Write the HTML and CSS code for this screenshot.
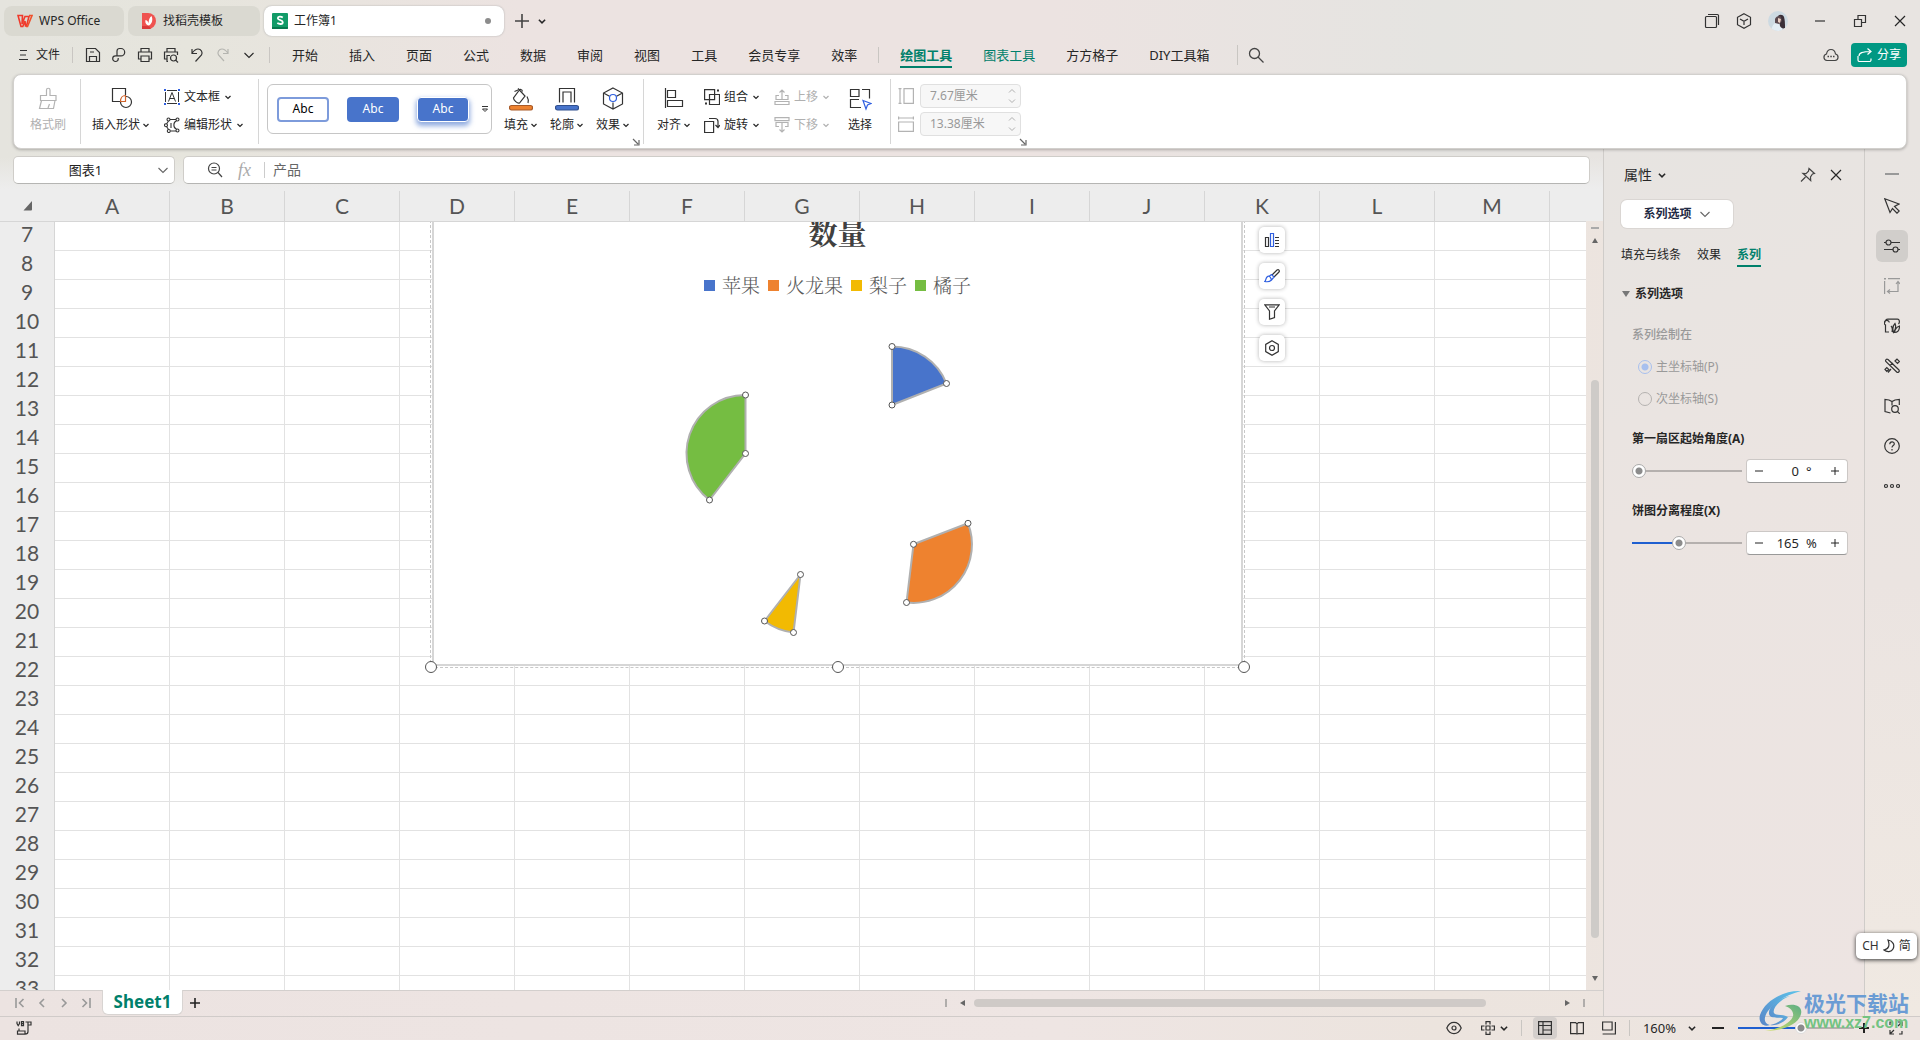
FILE: index.html
```html
<!DOCTYPE html>
<html lang="zh-CN">
<head>
<meta charset="utf-8">
<title>工作簿1 - WPS Office</title>
<link rel="stylesheet" href="styles.css">
</head>
<body>
<svg class="defs" aria-hidden="true">
  <symbol id="chev" viewBox="0 0 8 8"><path d="M1.500 3 4 5.500 6.500 3" fill="none" stroke="currentColor" stroke-width="1.200"/></symbol>
  <symbol id="chev-wide" viewBox="0 0 12 12"><path d="M1.500 4 6 8.500 10.500 4" fill="none" stroke="currentColor" stroke-width="1.100"/></symbol>
  <symbol id="launch" viewBox="0 0 8 8"><path d="M1 1 6 6M7 2v5H2" fill="none" stroke="#666" stroke-width="1.200"/></symbol>
  <symbol id="close" viewBox="0 0 16 16"><path d="M3 3l10 10M13 3 3 13" fill="none" stroke="currentColor" stroke-width="1.200"/></symbol>
</svg>

<header class="top">
  <div class="tabbar">
    <button class="doc-tab doc-home"><svg width="16" height="14" viewBox="0 0 16 14"><path d="M1 1.500h4.500L5 10l3-7.500h4L9.500 12h-1L8 7 5.800 12.500H4z" fill="none" stroke="#f0392b" stroke-width="1.600"/><path d="M12 1.500h3L10.500 12.500H9" fill="none" stroke="#f0502b" stroke-width="1.600"/></svg>WPS Office</button>
    <button class="doc-tab doc-docer"><svg width="16" height="16" viewBox="0 0 16 16"><path d="M1 0h6a8 8 0 0 1 0 16H1z" fill="#ef5350"/><path d="M1 13h7l2 3H1z" fill="#d93a3a"/><path d="M8 12.500C4.500 12 4 9 4.500 7c2 .5 3 2 3.200 3.500C7.500 7 8.500 4.500 10.500 3c1.500 3 1 7.500-2.500 9.500z" fill="#fff"/></svg>找稻壳模板</button>
    <button class="doc-tab doc-active"><svg width="16" height="16" viewBox="0 0 16 16"><rect width="16" height="16" rx="1" fill="#129b68"/><path d="M0 14h16v1a1 1 0 0 1-1 1H0z" fill="#08794e"/><path d="M10.800 4.500C9 3.200 5.800 3.200 5.800 5.300c0 2.400 5 1.400 5 3.900 0 2.300-3.500 2.200-5.500.9" fill="none" stroke="#fff" stroke-width="1.800"/></svg>工作簿1<span class="dot"></span></button>
    <button class="icon-btn new-tab" aria-label="新建"><svg width="14" height="14" viewBox="0 0 14 14"><path d="M7 0v14M0 7h14" stroke="#444" stroke-width="1.600"/></svg></button>
    <button class="icon-btn tab-more" aria-label="标签列表"><svg width="10" height="10"><use href="#chev"/></svg></button>
    <div class="window-tools">
      <button class="icon-btn" aria-label="窗口"><svg width="16" height="16" viewBox="0 0 16 16" fill="none" stroke="#333" stroke-width="1.200"><rect x="1.500" y="3.500" width="11" height="11" rx="1"/><path d="M4 1.500h9.500a1 1 0 0 1 1 1V12"/></svg></button>
      <button class="icon-btn" aria-label="应用"><svg width="16" height="16" viewBox="0 0 16 16" fill="none" stroke="#333" stroke-width="1.200"><path d="M8 .8 14.500 4.300v7.400L8 15.200 1.500 11.700V4.300zM4 6l4 2.200L12 6M8 8.200V12"/></svg></button>
      <button class="icon-btn avatar" aria-label="账户"><svg width="20" height="20" viewBox="0 0 20 20"><defs><clipPath id="round"><circle cx="10" cy="10" r="10"/></clipPath></defs><g clip-path="url(#round)"><rect width="20" height="20" fill="#cddae2"/><path d="M3 20c1-6 4-9 7-9l4 4v5z" fill="#e4eef5"/><path d="M10 5c2-2 5-1.500 6 1 1 3 1 7 1 11-2 1-4 0-5-2z" fill="#3a2f38"/><path d="M7 8c1-3 5-4 6-2l1 4-3 3-4-1z" fill="#5b4a50"/><path d="M10 7l3 1-1 4-2-1z" fill="#ead0c4"/></g></svg></button>
      <button class="icon-btn" aria-label="最小化"><svg width="16" height="16" viewBox="0 0 16 16"><path d="M3 8h10" stroke="#333" stroke-width="1.200"/></svg></button>
      <button class="icon-btn" aria-label="还原"><svg width="16" height="16" viewBox="0 0 16 16" fill="none" stroke="#333" stroke-width="1.200"><path d="M2.500 6.500h7v7h-7zM6 6V2.500h7.500v7H10"/></svg></button>
      <button class="icon-btn" aria-label="关闭"><svg width="16" height="16"><use href="#close"/></svg></button>
    </div>
  </div>

  <div class="menubar">
    <button class="file-btn"><svg width="9" height="12" viewBox="0 0 9 12"><path d="M1 1.500h7M1 6h6M0 10.500h9" stroke="#333" stroke-width="1.200"/></svg>文件</button>
    <i class="vsep file-sep"></i>
    <div class="quick">
      <button class="icon-btn" aria-label="保存"><svg width="16" height="16" viewBox="0 0 16 16" fill="none" stroke="#333" stroke-width="1.200"><path d="M1.500 1.500h9l4 4v9h-13zM5 5h4M4.500 14V9.500h7V14"/></svg></button>
      <button class="icon-btn" aria-label="输出"><svg width="16" height="16" viewBox="0 0 16 16" fill="none" stroke="#333" stroke-width="1.200"><path d="M6 8.500V4a2.500 2.500 0 0 1 2.500-2.500h1.500a3.700 3.700 0 0 1 0 7.400H4.500a2.700 2.700 0 0 0 0 5.600c2 0 2.700-1.300 2.700-2.500V11"/></svg></button>
      <button class="icon-btn" aria-label="打印"><svg width="16" height="16" viewBox="0 0 16 16" fill="none" stroke="#333" stroke-width="1.200"><path d="M4 5V1.500h8V5M4 12H1.500V5h13v7H12M4 9h8v5.500H4z"/></svg></button>
      <button class="icon-btn" aria-label="打印预览"><svg width="16" height="16" viewBox="0 0 16 16" fill="none" stroke="#333" stroke-width="1.200"><path d="M4 5V1.500h8V5M4 12H1.500V5h13v3M5 14.500H4V8.500h3"/><circle cx="10.500" cy="11" r="3"/><path d="m12.700 13.200 2.300 2.300"/></svg></button>
      <button class="icon-btn" aria-label="撤销"><svg width="16" height="16" viewBox="0 0 16 16" fill="none" stroke="#333" stroke-width="1.200"><path d="M3 2v4.500h5M3.200 6C5 3.500 7 2 9 2a4 4 0 0 1 3.500 6L6.500 14.500"/></svg></button>
      <button class="icon-btn muted" aria-label="恢复"><svg width="16" height="16" viewBox="0 0 16 16" fill="none" stroke="#b5b5b0" stroke-width="1.200"><path d="M13 2v4.500H8M12.800 6C11 3.500 9 2 7 2a4 4 0 0 0-3.500 6L9 14"/></svg></button>
      <button class="icon-btn" aria-label="更多"><svg width="12" height="12"><use href="#chev-wide"/></svg></button>
    </div>
    <i class="vsep file-sep"></i>
    <nav class="menus menus-first"><a href="#">开始</a><a href="#">插入</a><a href="#">页面</a><a href="#">公式</a><a href="#">数据</a><a href="#">审阅</a><a href="#">视图</a><a href="#">工具</a><a href="#">会员专享</a><a href="#">效率</a></nav>
    <i class="vsep menu-sep"></i>
    <nav class="menus"><a href="#" class="current">绘图工具</a><a href="#" class="context">图表工具</a><a href="#">方方格子</a><a href="#">DIY工具箱</a></nav>
    <i class="vsep search-sep"></i>
    <button class="icon-btn" aria-label="搜索"><svg width="16" height="16" viewBox="0 0 16 16" fill="none" stroke="#444" stroke-width="1.300"><circle cx="6.500" cy="6.500" r="5"/><path d="m10 10 5.500 5.500"/></svg></button>
    <div class="share-area">
      <button class="icon-btn" aria-label="云"><svg width="16" height="14" viewBox="0 0 16 14" fill="none" stroke="#444" stroke-width="1.200"><path d="M4 12.500a3.300 3.300 0 0 1-.5-6.500C4 3 6 1.500 8 1.500S12 3 12.500 6a3.300 3.300 0 0 1-.5 6.500z"/><path d="M4.500 8.500h1.500M7.300 8.500h1.500M10 8.500h1.500" stroke-width="1.500"/></svg></button>
      <button class="share"><svg width="15" height="14" viewBox="0 0 15 14" fill="none" stroke="#fff" stroke-width="1.200"><path d="M1 8v4a1.500 1.500 0 0 0 1.500 1.500h10A1.500 1.500 0 0 0 14 12v-1.500M2 8c0-3 3-4.500 12-4.500M10.500.5l3.500 3-3.500 3"/></svg>分享</button>
    </div>
  </div>

  <div class="ribbon">
    <section class="group g-format">
      <button class="tool muted"><svg width="24" height="24" viewBox="0 0 24 24" fill="none" stroke="#b3b3b3" stroke-width="1.200"><path d="M4.500 8.500h6V3a1.700 1.700 0 0 1 3.500 0v5.500h6v5h-15.500zM5.500 13.500 3.500 21.500h14l1.500-8M12 21l1.500-4"/></svg><span>格式刷</span></button>
    </section>
    <section class="group g-insert">
      <button class="tool"><svg width="24" height="24" viewBox="0 0 24 24" fill="none" stroke="#333" stroke-width="1.200"><path d="M11 14.500H3.500v-13h13V8"/><circle cx="17" cy="15" r="5.500"/><path d="M11.500 14.500c0-3.500 2-6 5-6v6z" stroke="#d0622a" fill="#fff"/></svg><span>插入形状<svg class="chev"><use href="#chev"/></svg></span></button>
      <div class="stack">
        <button class="row-tool"><svg width="16" height="16" viewBox="0 0 16 16" fill="none"><path d="M3 1.500h10M3 14.500h10M1.500 3v10M14.500 3v10M4.500 12.500 8 3.500l3.500 9M5.700 9.500h4.600" stroke="#333"/><path d="M0 0h2v2H0zM14 0h2v2h-2zM0 14h2v2H0zM14 14h2v2h-2z" fill="#2f5fe0"/></svg><span>文本框</span><svg class="chev"><use href="#chev"/></svg></button>
        <button class="row-tool"><svg width="16" height="16" viewBox="0 0 16 16" fill="none" stroke="#333" stroke-width="1.100"><path d="M6 2.500h6M4.500 4 2.500 7M2.500 9.500l2 3M6.500 14h5.500M12.500 4C9 5 9 11 12.500 12M7 6v5"/><circle cx="4.500" cy="2.500" r="1.500"/><circle cx="13.500" cy="2.500" r="1.500"/><circle cx="2" cy="8.200" r="1.500"/><circle cx="4.800" cy="14" r="1.500"/><circle cx="13.500" cy="13.500" r="1.500"/></svg><span>编辑形状</span><svg class="chev"><use href="#chev"/></svg></button>
      </div>
    </section>
    <section class="group g-style">
      <div class="gallery">
        <button class="swatch outlined">Abc</button>
        <button class="swatch solid">Abc</button>
        <button class="swatch glow">Abc</button>
        <button class="icon-btn more" aria-label="更多样式"><svg width="8" height="8" viewBox="0 0 8 8"><path d="M1 1.500h6" stroke="#333"/><path d="M1.500 4h5L4 6.500z" fill="#fff" stroke="#333"/></svg></button>
      </div>
      <button class="tool"><svg width="24" height="24" viewBox="0 0 24 24" fill="none" stroke="#333" stroke-width="1.200"><path d="M5.500 4.500 9 3M9 1.500l7 7.500-5.500 7c-2 1-6-3-6-5L10 3.500c1-1.500 3-1.500 3.500 1M18 9.500c1.500 2.500 1.700 4.500 1 6.500"/><rect x=".5" y="18.500" width="23" height="4.500" rx="2" fill="#ee822f" stroke="#a85a28"/></svg><span>填充<svg class="chev"><use href="#chev"/></svg></span></button>
      <button class="tool"><svg width="24" height="24" viewBox="0 0 24 24" fill="none" stroke="#333" stroke-width="1.200"><path d="M4.500 15.500v-14h15v14M8 15.500V5h8v10.500"/><rect x=".5" y="18.500" width="23" height="4.500" rx="2" fill="#4874cb" stroke="#31508f"/></svg><span>轮廓<svg class="chev"><use href="#chev"/></svg></span></button>
      <button class="tool"><svg width="24" height="24" viewBox="0 0 24 24" fill="none" stroke="#333" stroke-width="1.200"><path d="M12 1 21.500 6v11L12 22 2.500 17V6zM2.500 6l6 3.300M21.500 6l-6 3.300M12 15.500V22"/><circle cx="12" cy="11" r="3.500" stroke="#2f5fe0"/></svg><span>效果<svg class="chev"><use href="#chev"/></svg></span></button>
      <button class="launcher" aria-label="样式设置"><svg width="8" height="8"><use href="#launch"/></svg></button>
    </section>
    <section class="group g-arrange">
      <button class="tool"><svg width="24" height="24" viewBox="0 0 24 24" fill="none" stroke="#333" stroke-width="1.200"><path d="M3.500 1v20M5.500 3.500h8v7h-8zM5.500 13.500h15v6h-15z"/></svg><span>对齐<svg class="chev"><use href="#chev"/></svg></span></button>
      <div class="stack s-group">
        <button class="row-tool"><svg width="16" height="16" viewBox="0 0 16 16" fill="none" stroke="#333" stroke-width="1.200"><path d="M.6.6h10v10H.6zM5.500 5.500h10v10h-10z"/><path d="M13 1.500h2M1 14.500h2" stroke-width="2"/></svg><span>组合</span><svg class="chev"><use href="#chev"/></svg></button>
        <button class="row-tool"><svg width="16" height="16" viewBox="0 0 16 16" fill="none" stroke="#333" stroke-width="1.200"><path d="M.6 4.500h9v11h-9zM5 1.500h6c2 0 3 1 3 3V10M11.500 8l2.500 2.500L16 8"/></svg><span>旋转</span><svg class="chev"><use href="#chev"/></svg></button>
      </div>
      <div class="stack s-order">
        <button class="row-tool muted"><svg width="16" height="16" viewBox="0 0 16 16" fill="none" stroke="#b3b3b3" stroke-width="1.200"><path d="M8 10.500V.8M5.500 3.500 8 1l2.500 2.500M5 6.500H2v4h12v-4h-3M1 12.500h14v3H1z"/></svg><span>上移</span><svg class="chev"><use href="#chev"/></svg></button>
        <button class="row-tool muted"><svg width="16" height="16" viewBox="0 0 16 16" fill="none" stroke="#b3b3b3" stroke-width="1.200"><path d="M8 5.500v9.700M5.500 12.500 8 15l2.500-2.500M5 9.500H2v-4h12v4h-3M1 .6h14v3H1z"/></svg><span>下移</span><svg class="chev"><use href="#chev"/></svg></button>
      </div>
      <button class="tool t-select"><svg width="24" height="24" viewBox="0 0 24 24" fill="none" stroke="#333" stroke-width="1.200"><path d="M2.500 2.500H11v7H2.500zM14 2.500h7.500v9M13 20.500H2.500v-8H11"/><path d="m15 13.500 8 3-3.500 1.500-1.500 4z" stroke="#2f5fe0"/></svg><span>选择</span></button>
    </section>
    <section class="group g-size">
      <label class="size-row"><svg width="16" height="16" viewBox="0 0 16 16" fill="none" stroke="#b3b3b3" stroke-width="1.200"><path d="M.5.600h3M2 .6v14.800M.5 15.400h3M6 .6h9.400v14.800H6z"/></svg><span class="size-box"><input type="text" value="7.67厘米" disabled aria-label="高度"><svg width="8" height="16" viewBox="0 0 8 16" fill="none" stroke="#b0b0b0"><path d="M1 4.500 4 1.500l3 3M1 11.500l3 3 3-3"/></svg></span></label>
      <label class="size-row"><svg width="16" height="16" viewBox="0 0 16 16" fill="none" stroke="#b3b3b3" stroke-width="1.200"><path d="M.6.500v3M.6 2h14.800M15.400.500v3M.6 6v9.400h14.800V6z"/></svg><span class="size-box"><input type="text" value="13.38厘米" disabled aria-label="宽度"><svg width="8" height="16" viewBox="0 0 8 16" fill="none" stroke="#b0b0b0"><path d="M1 4.500 4 1.500l3 3M1 11.500l3 3 3-3"/></svg></span></label>
      <button class="launcher" aria-label="大小设置"><svg width="8" height="8"><use href="#launch"/></svg></button>
    </section>
  </div>
</header>

<main class="main">
  <div class="work">
    <div class="formula-row">
      <div class="name-box"><input type="text" value="图表1" aria-label="名称框"><svg width="12" height="12"><use href="#chev-wide"/></svg></div>
      <div class="formula-box">
        <svg width="16" height="16" viewBox="0 0 16 16" fill="none" stroke="#444" stroke-width="1.200"><circle cx="7" cy="6.500" r="5.500"/><path d="m11 10.500 4 4.500M4.500 5.500h5M4.500 8h5"/></svg>
        <em class="fx">fx</em>
        <input type="text" value="产品" aria-label="编辑栏">
      </div>
    </div>
    <div class="sheet">
      <div class="grid-view">
        <table class="cells">
          <colgroup><col class="c-head"><col><col><col><col><col><col><col><col><col><col><col><col><col><col></colgroup>
          <thead><tr><th class="corner"><svg width="10" height="10" viewBox="0 0 10 10"><path d="M9 0v8.500a1 1 0 0 1-1 1H.5z" fill="#666"/></svg></th><th>A</th><th>B</th><th>C</th><th>D</th><th>E</th><th>F</th><th>G</th><th>H</th><th>I</th><th>J</th><th>K</th><th>L</th><th>M</th><th></th></tr></thead>
          <tbody>
<tr><th>7<td><td><td><td><td><td><td><td><td><td><td><td><td><td>
<tr><th>8<td><td><td><td><td><td><td><td><td><td><td><td><td><td>
<tr><th>9<td><td><td><td><td><td><td><td><td><td><td><td><td><td>
<tr><th>10<td><td><td><td><td><td><td><td><td><td><td><td><td><td>
<tr><th>11<td><td><td><td><td><td><td><td><td><td><td><td><td><td>
<tr><th>12<td><td><td><td><td><td><td><td><td><td><td><td><td><td>
<tr><th>13<td><td><td><td><td><td><td><td><td><td><td><td><td><td>
<tr><th>14<td><td><td><td><td><td><td><td><td><td><td><td><td><td>
<tr><th>15<td><td><td><td><td><td><td><td><td><td><td><td><td><td>
<tr><th>16<td><td><td><td><td><td><td><td><td><td><td><td><td><td>
<tr><th>17<td><td><td><td><td><td><td><td><td><td><td><td><td><td>
<tr><th>18<td><td><td><td><td><td><td><td><td><td><td><td><td><td>
<tr><th>19<td><td><td><td><td><td><td><td><td><td><td><td><td><td>
<tr><th>20<td><td><td><td><td><td><td><td><td><td><td><td><td><td>
<tr><th>21<td><td><td><td><td><td><td><td><td><td><td><td><td><td>
<tr><th>22<td><td><td><td><td><td><td><td><td><td><td><td><td><td>
<tr><th>23<td><td><td><td><td><td><td><td><td><td><td><td><td><td>
<tr><th>24<td><td><td><td><td><td><td><td><td><td><td><td><td><td>
<tr><th>25<td><td><td><td><td><td><td><td><td><td><td><td><td><td>
<tr><th>26<td><td><td><td><td><td><td><td><td><td><td><td><td><td>
<tr><th>27<td><td><td><td><td><td><td><td><td><td><td><td><td><td>
<tr><th>28<td><td><td><td><td><td><td><td><td><td><td><td><td><td>
<tr><th>29<td><td><td><td><td><td><td><td><td><td><td><td><td><td>
<tr><th>30<td><td><td><td><td><td><td><td><td><td><td><td><td><td>
<tr><th>31<td><td><td><td><td><td><td><td><td><td><td><td><td><td>
<tr><th>32<td><td><td><td><td><td><td><td><td><td><td><td><td><td>
<tr><th>33<td><td><td><td><td><td><td><td><td><td><td><td><td><td>
          </tbody>
        </table>
        <div class="float-layer">
          <figure class="chart">
            <figcaption class="chart-title">数量</figcaption>
            <ul class="legend"><li class="blue">苹果</li><li class="orange">火龙果</li><li class="yellow">梨子</li><li class="green">橘子</li></ul>
            <svg class="plot" width="807" height="366" viewBox="434 298 807 366">
              <g stroke="#b0b0b0" stroke-width="2" stroke-linejoin="round">
                <path d="M892 406V347.500A58.500 58.500 0 0 1 946.500 384.500z" fill="#4874cb"/>
                <path d="M745.500 454.500V396A58.500 58.500 0 0 0 709.500 501z" fill="#75bd42"/>
                <path d="M913.500 545.300 968 524.300A58.500 58.500 0 0 1 906.500 603.500z" fill="#ee822f"/>
                <path d="M800.500 575.500 764.500 622A58.500 58.500 0 0 0 793.500 633.500z" fill="#f2ba02"/>
              </g>
              <g fill="#fff" stroke="#555">
                <circle cx="892" cy="406" r="3"/><circle cx="892" cy="347.500" r="3"/><circle cx="946.500" cy="384.500" r="3"/>
                <circle cx="745.500" cy="454.500" r="3"/><circle cx="745.500" cy="396" r="3"/><circle cx="709.500" cy="501" r="3"/>
                <circle cx="913.500" cy="545.300" r="3"/><circle cx="968" cy="524.300" r="3"/><circle cx="906.500" cy="603.500" r="3"/>
                <circle cx="800.500" cy="575.500" r="3"/><circle cx="764.500" cy="622" r="3"/><circle cx="793.500" cy="633.500" r="3"/>
              </g>
            </svg>
            <i class="handle h-left"></i><i class="handle h-mid"></i><i class="handle h-right"></i>
          </figure>
          <div class="chart-tools">
            <button aria-label="图表元素"><svg width="16" height="16" viewBox="0 0 16 16" fill="none" stroke="#333" stroke-width="1.200"><path d="M1.500 5.500h3v9h-3zM11 5.500h4M11 8.500h4M11 11.500h4M11 14.500h4"/><path d="M6.500 1.500h3v13h-3z" stroke="#2f5fe0"/></svg></button>
            <button aria-label="图表样式"><svg width="16" height="16" viewBox="0 0 16 16" fill="none" stroke="#333" stroke-width="1.200"><path d="m8 7 5-5c1.500-1 3 .5 2 2l-5 5"/><path d="M7.500 6.500 10 9 7.500 12C5.500 14 3 14 .8 13.500 2 12.500 1.500 10.500 3 9s3-1.500 4.500 3M7.500 6.500 5.500 8" stroke="#2f5fe0"/></svg></button>
            <button aria-label="筛选"><svg width="16" height="16" viewBox="0 0 16 16" fill="none" stroke="#333" stroke-width="1.200"><path d="M.8.8h14.400L10.500 7v6.500l-5 1.700V7zM5 3h6"/></svg></button>
            <button aria-label="设置"><svg width="16" height="16" viewBox="0 0 16 16" fill="none" stroke="#333" stroke-width="1.200"><path d="M8 .8 14.300 4.400v7.200L8 15.200 1.700 11.600V4.400z"/><circle cx="8" cy="8" r="2.500"/></svg></button>
          </div>
        </div>
      </div>
      <div class="vscroll"><i class="dash"></i><i class="tri-up"></i><i class="thumb"></i><i class="tri-down"></i></div>
    </div>
    <div class="sheet-tabs">
      <div class="sheet-nav">
        <button class="icon-btn" aria-label="首个"><svg width="10" height="10" viewBox="0 0 10 10" fill="none" stroke="#999" stroke-width="1.600"><path d="M1 0v10M8.500 1 4.500 5l4 4"/></svg></button>
        <button class="icon-btn" aria-label="上一个"><svg width="10" height="10" viewBox="0 0 10 10" fill="none" stroke="#999" stroke-width="1.600"><path d="M7 1 3 5l4 4"/></svg></button>
        <button class="icon-btn" aria-label="下一个"><svg width="10" height="10" viewBox="0 0 10 10" fill="none" stroke="#999" stroke-width="1.600"><path d="m3 1 4 4-4 4"/></svg></button>
        <button class="icon-btn" aria-label="末个"><svg width="10" height="10" viewBox="0 0 10 10" fill="none" stroke="#999" stroke-width="1.600"><path d="m1.500 1 4 4-4 4M9 0v10"/></svg></button>
      </div>
      <button class="sheet-tab">Sheet1</button>
      <button class="icon-btn add-sheet" aria-label="新建工作表"><svg width="10" height="10" viewBox="0 0 10 10"><path d="M5 0v10M0 5h10" stroke="#222" stroke-width="1.600"/></svg></button>
      <div class="hscroll"><i class="bar"></i><i class="tri-left"></i><i class="track"><i class="thumb"></i></i><i class="tri-right"></i><i class="bar"></i></div>
    </div>
  </div>

  <aside class="panel">
    <div class="panel-head"><h2>属性<svg width="10" height="10"><use href="#chev"/></svg></h2>
      <button class="icon-btn" aria-label="固定"><svg width="16" height="16" viewBox="0 0 16 16" fill="none" stroke="#444" stroke-width="1.200"><path d="m9 1.500 5.500 5-2 .5-2 3 .2 3.500L3 6.500l3 .2 2.500-2.500zM5.500 10 1 14.500"/></svg></button>
      <button class="icon-btn" aria-label="关闭面板"><svg width="16" height="16"><use href="#close"/></svg></button>
    </div>
    <button class="series-select">系列选项<svg width="12" height="12"><use href="#chev-wide"/></svg></button>
    <nav class="panel-tabs"><a href="#">填充与线条</a><a href="#">效果</a><a href="#" class="current">系列</a></nav>
    <h3 class="fold"><i></i>系列选项</h3>
    <fieldset class="axis" disabled>
      <legend>系列绘制在</legend>
      <label><input type="radio" name="axis" checked>主坐标轴(P)</label>
      <label><input type="radio" name="axis">次坐标轴(S)</label>
    </fieldset>
    <div class="field">
      <label for="angle">第一扇区起始角度(A)</label>
      <div class="field-row"><input type="range" id="angle" min="0" max="360" value="0">
        <span class="spinner"><button aria-label="减小角度"><svg width="8" height="8" viewBox="0 0 8 8"><path d="M0 4h8" stroke="#222"/></svg></button><input type="text" value="0" aria-label="角度值"><span>°</span><button aria-label="增大角度"><svg width="8" height="8" viewBox="0 0 8 8"><path d="M0 4h8M4 0v8" stroke="#222"/></svg></button></span></div>
    </div>
    <div class="field">
      <label for="explode">饼图分离程度(X)</label>
      <div class="field-row"><input type="range" id="explode" class="filled" min="0" max="400" value="165">
        <span class="spinner"><button aria-label="减小分离"><svg width="8" height="8" viewBox="0 0 8 8"><path d="M0 4h8" stroke="#222"/></svg></button><input type="text" value="165" aria-label="分离值"><span>%</span><button aria-label="增大分离"><svg width="8" height="8" viewBox="0 0 8 8"><path d="M0 4h8M4 0v8" stroke="#222"/></svg></button></span></div>
    </div>
  </aside>

  <aside class="strip">
    <i class="strip-dash"></i>
    <button aria-label="选择工具"><svg width="16" height="16" viewBox="0 0 16 16" fill="none" stroke="#333" stroke-width="1.200"><path d="M.8.8 15 6 10.500 8.500 15.200 13 13 15.200 8.500 10.500 6 14.500z"/></svg></button>
    <button class="on" aria-label="属性"><svg width="16" height="16" viewBox="0 0 16 16" fill="none" stroke="#333" stroke-width="1.200"><circle cx="4.500" cy="4.500" r="2.500"/><circle cx="11.500" cy="11.500" r="2.500"/><path d="M0 4.500h2M7 4.500h9M0 11.500h9M14 11.500h2"/></svg></button>
    <button aria-label="转换"><svg width="16" height="16" viewBox="0 0 16 16" fill="none" stroke="#999" stroke-width="1.200"><path d="M.6 3v13M4 .6h12M14 4v9.500H4M12 6l2-2.500L16 6M6 11.500 3.500 13.500 6 15.500"/><path d="M0 .6h2" stroke-width="2"/></svg></button>
    <button aria-label="图库"><svg width="16" height="16" viewBox="0 0 16 16" fill="none" stroke="#333" stroke-width="1.200"><path d="M5 14H1.500V6.500M1.500 7a2.500 2.500 0 1 1 3.800-2.500M1 4.500c0-2 1-3.300 3-3.300h9.500c2 0 2.500 3 1 4.800"/><path d="M7 8c1.500 1.500 1.500 4 1 6M11 5.500c-2.500 2.500-2.500 6-1.500 9 2-2.500 2.700-6 1.500-9zM15.500 8c-3 1-4.500 3.500-5 6.500 3 0 5-2.500 5-6.500z"/></svg></button>
    <button aria-label="工具"><svg width="16" height="16" viewBox="0 0 16 16" fill="none" stroke="#333" stroke-width="1.200"><path d="m4 1.500 11 10.500c1 1.500-1 3-2.300 2L1.800 3.500C1 2 2.500.5 4 1.500zM6 7.500 9 5"/><path d="m11 3 2-2 2.500 2.500-2 2zM1 11.500l1.800-2 2 2-2 2zM7 11l-3 3.500"/></svg></button>
    <button aria-label="查找"><svg width="16" height="16" viewBox="0 0 16 16" fill="none" stroke="#333" stroke-width="1.200"><path d="M6.500 15 1 13.500V1.500L5 2l3 1.500L11 2l4.300-.5V7M8 3.500v4"/><circle cx="11" cy="11" r="3.300"/><path d="m13.300 13.300 2.500 2.500"/></svg></button>
    <button aria-label="帮助"><svg width="16" height="16" viewBox="0 0 16 16" fill="none" stroke="#333" stroke-width="1.200"><circle cx="8" cy="8" r="7.300"/><path d="M5.800 6.200c0-3 4.500-3 4.500-.3C10.300 7.500 8 7.700 8 9.500M8 11v1.500"/></svg></button>
    <button aria-label="更多"><svg width="16" height="16" viewBox="0 0 16 16" fill="none" stroke="#333" stroke-width="1.200"><circle cx="2" cy="8" r="1.500"/><circle cx="8" cy="8" r="1.500"/><circle cx="14" cy="8" r="1.500"/></svg></button>
  </aside>
</main>

<footer class="status">
  <button class="icon-btn vb" aria-label="宏"><svg width="16" height="14" viewBox="0 0 16 14" fill="none" stroke="#333" stroke-width="1.200"><path d="M1 .5v2l1.200 2 1.300-2v-2M5.500.6v4h2V.6zM5.500 2.600h2M9.500 1H15v3h-3M12 1v9.500c0 1.700-1 2.700-3 2.700H1.500V10H9v3M3 10V7.500"/></svg></button>
  <div class="status-tools">
    <button class="icon-btn eye" aria-label="护眼"><svg width="16" height="14" viewBox="0 0 16 14" fill="none" stroke="#333" stroke-width="1.200"><path d="M.8 7C4-.5 12-.5 15.200 7 12 14.500 4 14.500.8 7z"/><circle cx="8" cy="7" r="2"/></svg></button>
    <button class="icon-btn cross" aria-label="阅读模式"><svg width="14" height="14" viewBox="0 0 14 14" fill="none" stroke="#333" stroke-width="1.200"><path d="M5 3.500V.6h4v2.900M5 10.500v2.900h4v-2.900M3.500 5H.6v4h2.900M10.500 5h2.900v4h-2.900M5 5h4v4H5z"/></svg><svg width="10" height="10"><use href="#chev"/></svg></button>
    <i class="vsep"></i>
    <button class="icon-btn view on" aria-label="普通视图"><svg width="14" height="14" viewBox="0 0 14 14" fill="none" stroke="#333" stroke-width="1.200"><path d="M.6.6h12.800v12.800H.6zM.6 4.500h12.800M5 .6v12.800M5 9h8.400"/></svg></button>
    <button class="icon-btn view" aria-label="分页预览"><svg width="14" height="14" viewBox="0 0 14 14" fill="none" stroke="#333" stroke-width="1.200"><path d="M.6 1.600h5L7 3l1.400-1.400h5v11H8.400L7 13l-1.400-.4h-5zM7 3v10"/></svg></button>
    <button class="icon-btn view" aria-label="页面布局"><svg width="14" height="14" viewBox="0 0 14 14" fill="none" stroke="#333" stroke-width="1.200"><path d="M.6 1h9.500v8H.6zM.6 13h12.800V1"/></svg></button>
    <i class="vsep"></i>
    <button class="zoom-value">160%<svg width="10" height="10"><use href="#chev"/></svg></button>
    <button class="icon-btn" aria-label="缩小"><svg width="12" height="12" viewBox="0 0 12 12"><path d="M0 6h12" stroke="#222" stroke-width="2"/></svg></button>
    <input type="range" class="zoom" min="0" max="100" value="55" aria-label="缩放">
    <button class="icon-btn" aria-label="放大"><svg width="10" height="10" viewBox="0 0 10 10"><path d="M5 0v10M0 5h10" stroke="#222" stroke-width="2"/></svg></button>
    <button class="icon-btn full" aria-label="全屏"><svg width="14" height="14" viewBox="0 0 14 14" fill="none" stroke="#333" stroke-width="1.200"><path d="M9 1h4v4M13 1 9 5M5 13H1V9M1 13l4-4M1 4V1h3M13 10v3h-3"/></svg></button>
  </div>
</footer>

<div class="ime"><span>CH</span><svg width="12" height="14" viewBox="0 0 12 14" fill="none" stroke="#333" stroke-width="1.200"><path d="M5 1c5 1 7 5 5 9-1.500 3-6 3.500-9 1C6 10 7 6 5 1z"/></svg><span>简</span></div>
<div class="brand">
  <svg width="44" height="42" viewBox="0 0 44 42"><defs><linearGradient id="sky" x1="0" y1="1" x2="1" y2="0"><stop offset="0" stop-color="#5a86c8"/><stop offset="1" stop-color="#5cc3ea"/></linearGradient><linearGradient id="leaf" x1="0" y1="1" x2="1" y2="0"><stop offset="0" stop-color="#d3e06a"/><stop offset="1" stop-color="#5cae84"/></linearGradient></defs><path d="M42 1C26 0 6 10 1 25c-2 7 3 13 10 10C5 34 4 28 9 21 16 11 28 5 42 1z" fill="url(#sky)"/><path d="M31 6C20 10 13 19 15 23c2 3 10 1 14 4-4 6-12 9-18 8 8-2 12-5 13-7-6-1-13 1-14-4C9 16 20 8 31 6z" fill="url(#sky)"/><path d="M26 16c9-3 18 0 16 8C40 33 26 41 6 41c14-2 26-8 28-15 1-4-2-8-8-10z" fill="url(#leaf)"/></svg>
  <div><strong>极光下载站</strong><span>www.xz7.com</span></div>
</div>
</body>
</html>
```
FILE: styles.css
```css
* { box-sizing: border-box; }
body {
  margin: 0;
  height: 100vh;
  display: flex;
  flex-direction: column;
  overflow: hidden;
  font: 12px/16px "Noto Sans", "Noto Sans CJK SC", sans-serif;
  color: #262626;
  background:
    linear-gradient(90deg, #e5e4de 0, #e6e5dd 10%, #ece3e1 27%, #ece3e1 55%, #e5e4e1 75%, #e8e4e1 88%) 0 0 / 100% 190px no-repeat,
    linear-gradient(90deg, #ece3e1 0, #eee5e3 55%, #ece4de 75%, #ede5e1 100%);
}
button, input { font: inherit; color: inherit; margin: 0; }
button { border: 0; background: none; padding: 0; white-space: nowrap; }
a { color: inherit; text-decoration: none; white-space: nowrap; }
h2, h3, ul, figure, fieldset { margin: 0; padding: 0; border: 0; }
svg { display: block; flex: none; }
.defs { position: absolute; width: 0; height: 0; }
.icon-btn { display: flex; align-items: center; justify-content: center; flex: none; }
.vsep { width: 1px; height: 16px; background: #c9c6c2; flex: none; }
.chev { width: 8px; height: 8px; }
.muted { color: #b0b0b0; }

/* title bar */
.tabbar { display: flex; align-items: center; height: 41px; padding-left: 4px; gap: 4px; }
.doc-tab { display: flex; align-items: center; height: 30px; border-radius: 8px; background: #dad9d1; gap: 6px; padding: 0 13px; text-align: left; }
.doc-home { width: 120px; }
.doc-docer { width: 132px; }
.doc-active { width: 240px; background: #fff; padding: 0 13px 0 8px; box-shadow: 0 0 2px #aaa; }
.dot { width: 6px; height: 6px; border-radius: 50%; background: #8c8c8c; margin-left: auto; }
.new-tab { margin-left: 7px; }
.tab-more { margin-left: 4px; }
.window-tools { margin-left: auto; display: flex; align-items: center; gap: 24px; padding-right: 12px; }
.window-tools .icon-btn { width: 16px; }
.window-tools .icon-btn:nth-child(2) { margin: 0 -8px; }
.window-tools .avatar { width: 20px; }

/* menu bar */
.menubar { display: flex; align-items: center; height: 28px; padding: 0 13px 0 19px; }
.file-btn { display: flex; align-items: center; gap: 8px; }
.file-sep { margin: 0 12px; }
.quick { display: flex; gap: 10px; }
.quick .icon-btn { width: 16px; height: 16px; }
.menus { display: flex; gap: 31px; font-size: 13px; }
.menus a { line-height: 26px; }
.menus-first { margin-left: 10px; }
.menus .current { color: #00806b; font-weight: 700; box-shadow: inset 0 -2px #00806b; }
.menus .context { color: #00806b; }
.menu-sep { margin: 0 21px; }
.search-sep { margin: 0 10px 0 28px; height: 20px; }
.share-area { margin-left: auto; display: flex; align-items: center; gap: 12px; }
.share { display: flex; align-items: center; justify-content: center; gap: 5px; width: 56px; height: 24px; border-radius: 4px; background: #009883; color: #fff; }

/* ribbon */
.ribbon { position: relative; z-index: 2; display: flex; height: 75px; margin: 5px 13px 0; background: #fff; border: 1px solid #d2d0cd; border-radius: 8px; box-shadow: 0 1px 3px rgba(0, 0, 0, .25); }
.group { position: relative; display: flex; align-items: flex-start; padding-top: 12px; }
.group + .group::before { content: ""; position: absolute; left: 0; top: 4px; height: 65px; width: 1px; background: #d6d6d6; }
.tool { display: flex; flex-direction: column; align-items: center; gap: 6px; }
.tool span { display: flex; align-items: center; gap: 2px; }
.stack { display: flex; flex-direction: column; gap: 8px; }
.row-tool { display: flex; align-items: center; height: 20px; gap: 4px; }
.launcher { position: absolute; right: 3px; bottom: 2px; }
.g-format { padding-left: 16px; width: 66px; }
.g-insert { padding-left: 12px; width: 178px; gap: 14px; }
.g-style { padding-left: 9px; width: 385px; gap: 12px; }
.g-arrange { padding-left: 14px; width: 247px; }
.s-group { margin-left: 13px; }
.s-order { margin-left: 14px; }
.t-select { margin-left: 18px; }
.g-size { flex-direction: column; gap: 4px; padding: 9px 3px 0 8px; width: 140px; }
.gallery { display: flex; align-items: center; width: 225px; height: 50px; margin-top: -3px; padding: 0 2px 0 9px; gap: 18px; border: 1px solid #c6c6c6; border-radius: 6px; }
.swatch { width: 52px; height: 25px; border-radius: 4px; }
.outlined { border: 2px solid #7d9bdb; color: #000; }
.solid { background: #4874cb; color: #fff; }
.glow { background: #4874cb; color: #fff; border: 1px solid #fff; box-shadow: 0 3px 5px 1px rgba(72, 116, 203, .6); }
.more { margin-left: -6px; }
.size-row { display: flex; align-items: center; gap: 6px; height: 24px; color: #999; }
.size-box { display: flex; align-items: center; width: 101px; height: 24px; padding: 0 4px 0 9px; background: #f7f7f7; border: 1px solid #e0e0e0; border-radius: 4px; }
.size-box input { flex: 1; min-width: 0; border: 0; padding: 0; background: none; color: #999; }

/* formula bar and sheet */
.main { flex: 1; min-height: 0; display: flex; }
.work { flex: 1; min-width: 0; display: flex; flex-direction: column; }
.formula-row { display: flex; gap: 8px; height: 42px; padding: 7px 13px 7px; background: linear-gradient(rgba(237, 237, 237, 0) 20%, #ededed 95%); flex: none; }
.name-box, .formula-box { display: flex; align-items: center; height: 28px; background: #fff; border: 1px solid #cfcdc9; border-bottom-color: #b5b5b3; border-radius: 5px; }
.name-box { width: 162px; padding-right: 5px; color: #666; }
.name-box input { flex: 1; min-width: 0; border: 0; padding: 0; background: none; text-align: center; font-size: 13px; color: #222; }
.formula-box { flex: 1; padding-left: 23px; }
.fx { margin-left: 15px; padding-right: 13px; border-right: 1px solid #ccc; font: italic 18px/16px "Liberation Serif", serif; color: #aaa; }
.formula-box input { flex: 1; min-width: 0; border: 0; padding: 0 8px; background: none; font-size: 14px; color: #666; }
.sheet { flex: 1; min-height: 0; display: flex; background: linear-gradient(#ededed 30px, transparent 30px); }
.grid-view { position: relative; flex: 1; min-width: 0; overflow: hidden; }
.cells { table-layout: fixed; width: 1665px; border-spacing: 0; border-collapse: separate; }
.cells col { width: 115px; }
.cells .c-head { width: 55px; }
.cells th, .cells td { padding: 0; height: 29px; border-right: 1px solid #e2e2e2; border-bottom: 1px solid #e2e2e2; background: #fff; }
.cells th { background: #ededed; font: 400 21px/24px Lato, "Noto Sans", sans-serif; color: #555; }
.cells tbody th { border-bottom: 0; border-right-color: #d6d6d6; padding-bottom: 5px; }
.cells thead th { height: 31px; border-color: #d6d6d6; }
.cells .corner { border-right: 0; padding-left: 23px; }
.float-layer { position: absolute; left: 55px; top: 31px; right: 0; bottom: 0; overflow: hidden; }
.chart { position: absolute; left: 377px; top: -30px; width: 811px; height: 474px; padding-top: 19px; background: #fff; border: 2px solid #d6d6d6; outline: 1px dashed #c8c8c8; outline-offset: 1px; }
.chart-title { font: 700 29px/40px "Noto Serif CJK SC", "Noto Sans CJK SC", serif; color: #404040; text-align: center; }
.legend { display: flex; justify-content: center; gap: 8px; margin-top: 20px; list-style: none; font: 300 19px/24px "Noto Serif CJK SC", "Noto Sans CJK SC", serif; color: #595959; }
.legend li { display: flex; align-items: center; gap: 7px; }
.legend li::before { content: ""; width: 11px; height: 11px; background: currentColor; }
.legend .blue::before { background: #4874cb; }
.legend .orange::before { background: #ee822f; }
.legend .yellow::before { background: #f2ba02; }
.legend .green::before { background: #75bd42; }
.handle { position: absolute; bottom: -9px; width: 12px; height: 12px; border: 1px solid #555; border-radius: 50%; background: #fff; }
.h-left { left: -9px; }
.h-mid { left: calc(50% - 6px); }
.h-right { right: -9px; }
.chart-tools { position: absolute; left: 1204px; top: 5px; display: flex; flex-direction: column; gap: 10px; }
.chart-tools button { display: grid; place-items: center; width: 26px; height: 26px; background: #fff; border-radius: 5px; box-shadow: 0 0 4px rgba(0, 0, 0, .3); }
.vscroll { width: 17px; padding: 36px 0 9px; display: flex; flex-direction: column; align-items: center; }
.dash { width: 8px; height: 2px; background: #aaa; margin-bottom: 9px; }
.tri-up, .tri-down { border: 3px solid transparent; }
.tri-up { border-top: 0; border-bottom: 5px solid #666; }
.tri-down { border-bottom: 0; border-top: 5px solid #666; margin-top: auto; }
.vscroll .thumb { width: 8px; height: 74%; margin-top: 137px; border-radius: 4px; background: #cecbc8; }

/* sheet tabs */
.sheet-tabs { display: flex; align-items: flex-start; height: 26px; flex: none; border-top: 1px solid #d3cfcd; padding-left: 15px; }
.sheet-nav { display: flex; gap: 12px; height: 24px; align-items: center; width: 87px; }
.sheet-tab { width: 81px; height: 25px; margin-top: -1px; background: #fff; border: 1px solid #d8d4d2; border-top: 0; border-radius: 0 0 6px 6px; font: 700 17px/24px "Noto Sans", sans-serif; color: #00806b; }
.add-sheet { height: 24px; margin-left: 7px; }
.hscroll { display: flex; align-items: center; height: 24px; width: 640px; margin-left: auto; margin-right: 18px; }
.bar { width: 2px; height: 8px; background: #b0adab; }
.tri-left, .tri-right { border: 3px solid transparent; }
.tri-left { border-left: 0; border-right: 5px solid #666; margin: 0 9px 0 13px; }
.tri-right { border-right: 0; border-left: 5px solid #666; margin: 0 13px 0 9px; }
.track { flex: 1; }
.track .thumb { display: block; width: 88%; height: 8px; border-radius: 4px; background: #cfcac7; }

/* properties panel */
.panel { width: 262px; flex: none; border-left: 1px solid #cfccc9; border-right: 1px solid #cfccc9; padding: 17px 15px 0 17px; background: linear-gradient(160deg, #e7e4e1, #ebe4e1 40%, #ede4e2); }
.panel-head { display: flex; align-items: center; gap: 12px; height: 18px; padding: 0 5px 0 3px; }
.panel-head h2 { display: flex; align-items: center; gap: 5px; margin-right: auto; font-size: 14px; font-weight: 400; }
.series-select { display: flex; align-items: center; justify-content: center; gap: 7px; width: 112px; height: 28px; margin-top: 16px; background: #fff; border-radius: 6px; box-shadow: 0 0 0 1px #dad6d3; font-weight: 700; color: #1f2a44; }
.series-select svg { color: #666; }
.panel-tabs { display: flex; gap: 16px; margin-top: 14px; }
.panel-tabs a { line-height: 25px; }
.panel-tabs .current { color: #00806b; font-weight: 700; box-shadow: inset 0 -2px #00806b; }
.fold { display: flex; align-items: center; gap: 5px; margin: 19px 0 0 1px; font-size: 12px; line-height: 16px; }
.fold i { border: 4px solid transparent; border-top: 6px solid #777; border-bottom: 0; }
.axis { display: flex; flex-direction: column; gap: 16px; margin: 25px 0 0 11px; color: #999; }
.axis legend { padding: 0 0 16px; font-weight: 500; }
.axis label { display: flex; align-items: center; gap: 4px; padding-left: 6px; }
.axis input { appearance: none; width: 14px; height: 14px; border: 1px solid #b5b2b0; border-radius: 50%; }
.axis input:checked { border-color: #a8c0ee; background: radial-gradient(#a8c0ee 3px, transparent 4px); }
.field { margin: 24px 0 0 11px; }
.field + .field { margin-top: 20px; }
.field label { font-weight: 700; }
.field-row { display: flex; align-items: center; gap: 4px; margin-top: 12px; }
input[type="range"] { appearance: none; width: 110px; height: 14px; background: none; flex: none; }
input[type="range"]::-webkit-slider-runnable-track { height: 2px; background: #b5b0ae; }
input[type="range"].filled::-webkit-slider-runnable-track { background: linear-gradient(90deg, #1f5fd0 42%, #b5b0ae 42%); }
input[type="range"]::-webkit-slider-thumb { appearance: none; width: 14px; height: 14px; margin-top: -6px; border: 1px solid #aaa; border-radius: 50%; background: radial-gradient(#8c8c8c 3px, #fff 4px); }
.spinner { display: flex; align-items: center; width: 102px; height: 24px; padding: 0 8px; background: #fff; border: 1px solid #ccc8c6; border-bottom-color: #999; border-radius: 4px; font-size: 13px; }
.spinner input { width: 36px; padding: 0; border: 0; background: none; text-align: right; }
.spinner span { margin: 0 auto 0 7px; }
.strip { width: 55px; flex: none; display: flex; flex-direction: column; align-items: center; padding: 24px 1px 0 0; background: linear-gradient(#e8e4e1, #ebe4e1 50%, #f0e9e2); }
.strip-dash { width: 14px; height: 2px; background: #999; margin-bottom: 15px; }
.strip button { display: grid; place-items: center; width: 32px; height: 32px; margin-bottom: 8px; border-radius: 6px; }
.strip .on { background: #d1cecb; }

/* status bar */
.status { display: flex; align-items: center; height: 24px; flex: none; border-top: 1px solid #d0cbc9; padding: 0 17px 1px 16px; }
.status-tools { margin-left: auto; display: flex; align-items: center; }
.cross { gap: 4px; margin-left: 19px; }
.status-tools .vsep { margin: 0 11px 0 12px; }
.view { width: 24px; height: 22px; margin-right: 8px; border-radius: 4px; }
.view.on { background: #d4cfcc; }
.status-tools .view + .vsep { margin: 0 13px 0 0; }
.zoom-value { display: flex; align-items: center; gap: 11px; margin-right: 15px; font-size: 13px; }
.status-tools .zoom { width: 116px; margin: 0 5px 0 14px; }
input[type="range"].zoom::-webkit-slider-runnable-track { background: linear-gradient(90deg, #1f5fd0 55%, #b5b0ae 55%); }
input[type="range"].zoom::-webkit-slider-thumb { width: 12px; height: 12px; margin-top: -5px; border-color: #ddd; }
.full { margin-left: 20px; }

/* overlays */
.ime { position: absolute; right: 3px; bottom: 81px; z-index: 3; display: flex; align-items: center; justify-content: center; gap: 4px; width: 61px; height: 26px; background: #fff; border-radius: 5px; box-shadow: 0 1px 4px #333; color: #333; }
.brand { position: absolute; right: 11px; bottom: 8px; z-index: 3; display: flex; gap: 1px; pointer-events: none; }
.brand div { display: flex; flex-direction: column; }
.brand strong { font: 700 21px/24px "Noto Sans CJK SC", sans-serif; color: #6b9cd4; }
.brand span { font: 700 16px/18px "Liberation Sans", sans-serif; color: #72c382; }
```
